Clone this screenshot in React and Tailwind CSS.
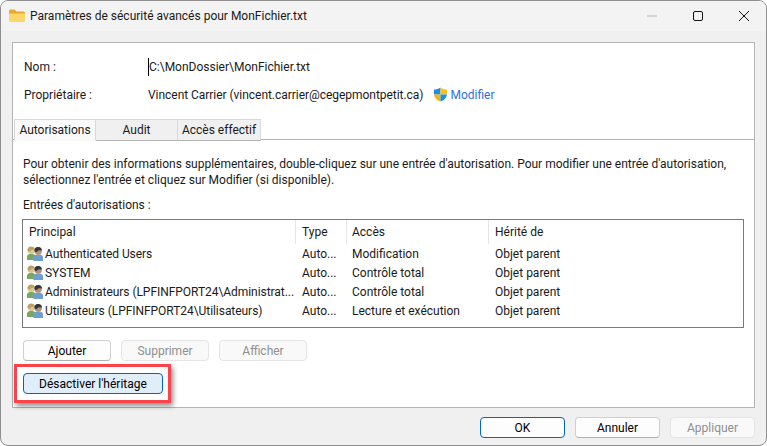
import React from 'react';

const font = { fontFamily: 'Roboto, sans-serif' };

const entries = [
  { name: 'Authenticated Users', type: 'Auto...', access: 'Modification', parent: 'Objet parent' },
  { name: 'SYSTEM', type: 'Auto...', access: 'Contrôle total', parent: 'Objet parent' },
  { name: 'Administrateurs (LPFINFPORT24\\Administrat...', type: 'Auto...', access: 'Contrôle total', parent: 'Objet parent' },
  { name: 'Utilisateurs (LPFINFPORT24\\Utilisateurs)', type: 'Auto...', access: 'Lecture et exécution', parent: 'Objet parent' },
];

const FolderIcon = () => (
  <svg width="16" height="14" viewBox="0 0 16 14">
    <path d="M0 2 Q0 0.5 1.5 0.5 H5.5 L7.5 2.5 H14.5 Q16 2.5 16 4 V6 H0 Z" fill="#e9a92c" />
    <path d="M0 4.5 H16 V11.5 Q16 13 14.5 13 H1.5 Q0 13 0 11.5 Z" fill="#fbd66a" />
  </svg>
);

const ShieldIcon = () => (
  <svg width="15" height="15" viewBox="0 0 15 15">
    <path d="M7.5 0.5 C5.5 2 3 2.6 1 2.6 V7.5 H7.5 Z" fill="#1a8fe3" />
    <path d="M7.5 0.5 C9.5 2 12 2.6 14 2.6 V7.5 H7.5 Z" fill="#fcc419" />
    <path d="M1 7.5 H7.5 V14.5 C4 13.4 1.5 11 1 7.5 Z" fill="#f0b414" />
    <path d="M14 7.5 H7.5 V14.5 C11 13.4 13.5 11 14 7.5 Z" fill="#1a8fe3" />
  </svg>
);

const UsersIcon = () => (
  <svg width="16" height="15" viewBox="0 0 16 15" className="shrink-0">
    <path d="M0 14 V10.5 Q0 8.5 2.5 8 H6 Q8.5 8.5 8.5 10.5 V14 Z" fill="#76a862" />
    <circle cx="4.3" cy="4.3" r="3.8" fill="#dcc692" />
    <path d="M0.5 4.3 A3.8 3.8 0 0 1 8 3.6 Q4 3.2 3 5.5 Q1.2 6 0.5 4.3 Z" fill="#b9a064" />
    <path d="M6.5 15 V11 Q6.5 9 9.5 8.4 H13 Q16 9 16 11 V15 Z" fill="#6f9fd0" />
    <circle cx="11.2" cy="5" r="3.7" fill="#b98f74" />
    <path d="M7.5 5 A3.7 3.7 0 0 1 14.9 4.6 Q11 3.8 10 5.8 Q8.2 6.4 7.5 5 Z" fill="#2f3640" />
  </svg>
);

const Button = ({ children, className = '', disabled, primary }) => (
  <button
    disabled={disabled}
    className={`h-[21px] rounded-[4px] border text-[12px] leading-none ${
      disabled
        ? 'border-[#e5e5e5] bg-[#f9f9f9] text-[#8f8f8f]'
        : primary
          ? 'border-[#0067c0] bg-[#fdfdfd] text-black'
          : 'border-[#cfcfcf] border-b-[#b0b0b0] bg-[#fdfdfd] text-black'
    } ${className}`}
  >
    {children}
  </button>
);

const Tab = ({ children, active, className = '' }) => (
  <div
    className={`h-[22px] -mb-px flex items-center justify-center border border-[#d9d9d9] text-[12px] text-[#1a1a1a] ${
      active ? 'bg-[#f9f9f9] border-b-[#f9f9f9]' : 'bg-[#f0f0f0] border-b-[#b4b4b4] border-l-0'
    } ${className}`}
  >
    {children}
  </div>
);

export default function App() {
  return (
    <div className="w-[767px] h-[446px] bg-white overflow-hidden" style={font}>
      <div className="w-full h-full flex flex-col bg-[#f0f0f0] border border-[#8f8f8f] rounded-t-[8px] rounded-b-[8px] overflow-hidden text-[12px] text-[#1a1a1a]">
        {/* Title bar */}
        <div className="h-[30px] shrink-0 flex items-center bg-[#f3f3f3]">
          <div className="ml-[8px] mr-[5px] flex"><FolderIcon /></div>
          <span className="text-[12px]">Paramètres de sécurité avancés pour MonFichier.txt</span>
          <div className="ml-auto flex items-center gap-[36px] pr-[17px]">
            <svg width="10" height="10" viewBox="0 0 10 10"><path d="M0 5 H10" stroke="#b5b5b5" /></svg>
            <svg width="10" height="10" viewBox="0 0 10 10"><rect x="0.5" y="0.5" width="9" height="9" rx="1.5" fill="none" stroke="#111" /></svg>
            <svg width="10" height="10" viewBox="0 0 10 10"><path d="M0 0 L10 10 M10 0 L0 10" stroke="#111" /></svg>
          </div>
        </div>

        {/* Main panel */}
        <div className="mt-[11px] ml-[11px] w-[743px] h-[366px] shrink-0 flex flex-col bg-white border border-[#b4b4b4]">
          <div className="pt-[14px] pl-[11px]">
            <div className="h-[19px] flex items-center">
              <span className="w-[124px]">Nom :</span>
              <span className="border-l border-black">C:\MonDossier\MonFichier.txt</span>
            </div>
            <div className="mt-[9px] h-[19px] flex items-center">
              <span className="w-[124px]">Propriétaire :</span>
              <span className="tracking-[-0.04px]">Vincent Carrier (vincent.carrier@cegepmontpetit.ca)</span>
              <span className="ml-[10px] mr-[2px] flex"><ShieldIcon /></span>
              <span className="text-[#2f6fe0]">Modifier</span>
            </div>
          </div>

          <div className="mt-[15px] flex border-b border-[#b4b4b4] h-[21px]">
            <Tab active className="w-[82px] ml-[1px]">Autorisations</Tab>
            <Tab className="w-[82px]">Audit</Tab>
            <Tab className="w-[83px]">Accès effectif</Tab>
          </div>

          <div className="flex-1 flex flex-col px-[9px]">
            <p className="mt-[16px] ml-[1px] leading-[16px] whitespace-nowrap">
              Pour obtenir des informations supplémentaires, double-cliquez sur une entrée d'autorisation. Pour modifier une entrée d'autorisation,
              <br />
              sélectionnez l'entrée et cliquez sur Modifier (si disponible).
            </p>
            <p className="mt-[9px] ml-[1px] leading-[16px]">Entrées d'autorisations :</p>

            {/* Permission list */}
            <div className="mt-[6px] w-[722px] h-[109px] border border-[#7a7a7a]">
              <div className="h-[24px] flex">
                <div className="w-[273px] pl-[6px] border-r border-[#e5e5e5] flex items-center">Principal</div>
                <div className="w-[51px] pl-[6px] border-r border-[#e5e5e5] flex items-center">Type</div>
                <div className="w-[142px] pl-[5px] border-r border-[#e5e5e5] flex items-center">Accès</div>
                <div className="pl-[6px] flex items-center">Hérité de</div>
              </div>
              <div>
                {entries.map((e) => (
                  <div key={e.name} className="h-[19px] flex items-center">
                    <div className="w-[273px] pl-[4px] flex items-center gap-[2px] whitespace-nowrap overflow-hidden tracking-[-0.05px]"><UsersIcon />{e.name}</div>
                    <div className="w-[51px] pl-[6px]">{e.type}</div>
                    <div className="w-[142px] pl-[5px]">{e.access}</div>
                    <div className="pl-[6px]">{e.parent}</div>
                  </div>
                ))}
              </div>
            </div>

            <div className="mt-[12px] flex gap-[10px] ml-[1px]">
              <Button className="w-[88px]">Ajouter</Button>
              <Button disabled className="w-[88px]">Supprimer</Button>
              <Button disabled className="w-[88px]">Afficher</Button>
            </div>

            <div className="mt-[12px] ml-[1px] relative w-[140px]">
              <button className="w-[140px] h-[21px] rounded-[4px] border border-[#0067c0] bg-[#e0eef9] text-[12px] leading-none text-black">
                Désactiver l'héritage
              </button>
              {/* Red annotation frame */}
              <div className="absolute left-[-9px] top-[-9px] w-[157px] h-[39px] border-[3px] border-[#f9444b] shadow-[2px_3px_5px_rgba(0,0,0,0.45)]" />
            </div>
          </div>
        </div>

        {/* Footer */}
        <div className="mt-[9px] flex gap-[10px] pl-[479px]">
          <Button primary className="w-[85px]">OK</Button>
          <Button className="w-[85px]">Annuler</Button>
          <Button disabled className="w-[85px]">Appliquer</Button>
        </div>
      </div>
    </div>
  );
}
